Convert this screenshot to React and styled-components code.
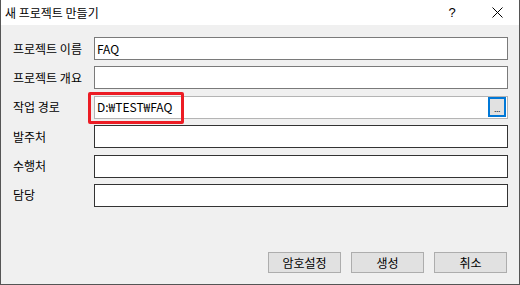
import React from 'react';
import styled, { createGlobalStyle } from 'styled-components';

const GlobalStyle = createGlobalStyle`
    html, body {
        margin: 0;
        padding: 0;
        background: #f0f0f0;
    }
    body {
        font-family: "Noto Sans CJK KR", "Liberation Sans", sans-serif;
        font-size: 12px;
        color: #000;
    }
`;

const Window = styled.div`
    width: 520px;
    height: 285px;
    box-sizing: border-box;
    border: 1px solid #555;
    border-top: none;
    background: #f0f0f0;
    display: flex;
    flex-direction: column;
`;

const TitleBar = styled.div`
    height: 25px;
    background: #fff;
    display: flex;
    align-items: center;
    padding-left: 4px;
    flex-shrink: 0;
`;

const Title = styled.div`
    flex: 1;
    font-size: 12px;
    line-height: 16px;
`;

const TitleButton = styled.div`
    width: 30px;
    height: 25px;
    display: flex;
    align-items: center;
    justify-content: center;
    font-family: "Liberation Sans", sans-serif;
    font-size: 13px;
    margin-right: ${p => p.$mr || 0}px;
`;

const Body = styled.div`
    flex: 1;
    display: flex;
    flex-direction: column;
    padding: 12px 11px 11px 11px;
`;

const Form = styled.div`
    display: grid;
    grid-template-columns: 82px 414px;
    grid-auto-rows: 23px;
    row-gap: 6.4px;
`;

const Label = styled.div`
    display: flex;
    align-items: center;
    padding-left: 1px;
    line-height: 16px;
    font-size: 12px;
`;

const Field = styled.div`
    position: relative;
    box-sizing: border-box;
    height: 23px;
    background: #fff;
    border: 1px solid ${p => p.$border || '#7a7a7a'};
    display: flex;
    align-items: center;
    padding-left: 2px;
    font-size: 12px;
    line-height: 16px;
`;

const BrowseButton = styled.div`
    margin-left: auto;
    margin-right: 1px;
    width: 18px;
    height: 20px;
    box-sizing: border-box;
    border: 2px solid #0078d7;
    background: #e1e1e1;
    display: flex;
    justify-content: center;
    align-items: flex-end;
    font-family: "Liberation Sans", sans-serif;
    font-size: 9px;
    line-height: 12px;
    letter-spacing: -0.5px;
`;

const Highlight = styled.div`
    position: absolute;
    left: -7px;
    top: -5px;
    width: 96px;
    height: 32px;
    box-sizing: border-box;
    border: 3px solid #ec1c24;
    border-radius: 2px;
    pointer-events: none;
`;

const Footer = styled.div`
    margin-top: auto;
    display: flex;
    justify-content: flex-end;
    gap: 10px;
    padding-right: 1px;
`;

const Button = styled.div`
    width: 73px;
    height: 21px;
    box-sizing: border-box;
    border: 1px solid #adadad;
    background: #e1e1e1;
    display: flex;
    align-items: center;
    justify-content: center;
    font-size: 12px;
    line-height: 16px;
`;

const CloseIcon = () => (
    <svg width="11" height="11" viewBox="0 0 11 11">
        <path d="M0.5 0.5 L10.5 10.5 M10.5 0.5 L0.5 10.5" stroke="#000" strokeWidth="1" fill="none" />
    </svg>
);

const rows = [
    { label: '프로젝트 이름', value: 'FAQ', border: '#7a7a7a' },
    { label: '프로젝트 개요', value: '', border: '#7a7a7a' },
    { label: '작업 경로', value: 'D:₩TEST₩FAQ', border: '#b4b4b4', path: true },
    { label: '발주처', value: '', border: '#333' },
    { label: '수행처', value: '', border: '#333' },
    { label: '담당', value: '', border: '#333' },
];

const App = () => {
    return (
        <>
            <GlobalStyle />
            <Window>
                <TitleBar>
                    <Title>새 프로젝트 만들기</Title>
                    <TitleButton $mr={15}>?</TitleButton>
                    <TitleButton $mr={7}><CloseIcon /></TitleButton>
                </TitleBar>
                <Body>
                    <Form>
                        {rows.map(r => (
                            <React.Fragment key={r.label}>
                                <Label>{r.label}</Label>
                                <Field $border={r.border}>
                                    {r.value}
                                    {r.path && <BrowseButton>...</BrowseButton>}
                                    {r.path && <Highlight />}
                                </Field>
                            </React.Fragment>
                        ))}
                    </Form>
                    <Footer>
                        <Button>암호설정</Button>
                        <Button>생성</Button>
                        <Button>취소</Button>
                    </Footer>
                </Body>
            </Window>
        </>
    );
};

export default App;
